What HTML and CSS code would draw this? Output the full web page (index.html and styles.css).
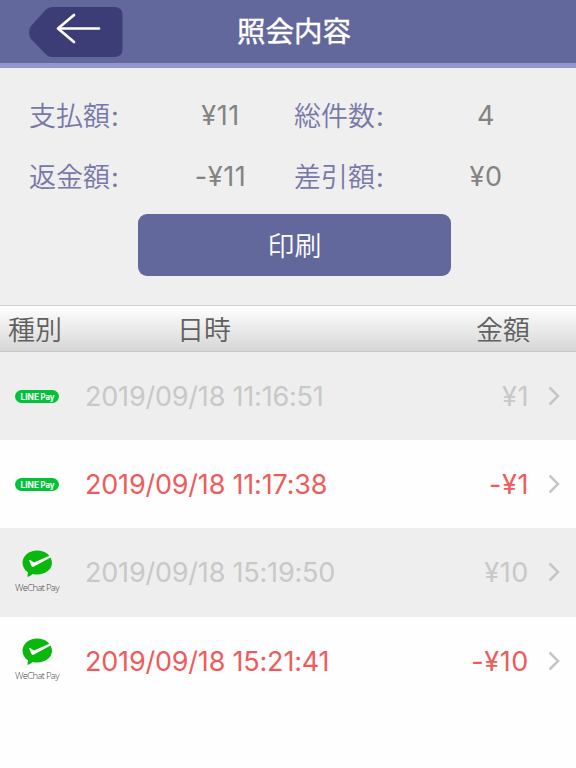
FILE: index.html
```html
<!DOCTYPE html>
<html lang="ja">
<head>
<meta charset="UTF-8">
<title>照会内容</title>
<link rel="stylesheet" href="styles.css">
</head>
<body>
    <div class="header">
        <svg class="back" viewBox="0 0 95 52" width="95" height="52">
            <path class="back-shape" d="M24 1 H86 Q94.500 1 94.500 9 V43 Q94.500 51 86 51 H24 Q20.500 51 18 48.500 L3 33 Q-1 26 3 20 L18 3.500 Q20.500 1 24 1 Z"/>
            <path class="back-arrow" d="M46 9 L30 22.500 L46 36 M30 22.500 H71"/>
        </svg>
        <h1>照会内容</h1>
    </div>

    <div class="summary">
        <div class="totals">
            <span class="label">支払額<b>:</b></span>
            <span class="value">¥11</span>
            <span class="label">総件数<b>:</b></span>
            <span class="value">4</span>
            <span class="label">返金額<b>:</b></span>
            <span class="value">-¥11</span>
            <span class="label">差引額<b>:</b></span>
            <span class="value">¥0</span>
        </div>
        <button class="print">印刷</button>
    </div>

    <div class="list-head">
        <span class="head-type">種別</span>
        <span class="head-date">日時</span>
        <span class="head-amount">金額</span>
    </div>

    <div class="list">
        <div class="row paid">
            <div class="type"><span class="line-pay"><svg width="44" height="13" viewBox="0 0 44 13"><text x="5.500" y="9.600" textLength="18.500" lengthAdjust="spacingAndGlyphs">LINE</text><text x="25.500" y="9.600" textLength="14" lengthAdjust="spacingAndGlyphs">Pay</text></svg></span></div>
            <span class="date">2019/09/18 11:16:51</span>
            <span class="amount">¥1</span>
            <svg class="chevron" width="12" height="20" viewBox="0 0 12 20"><path d="M1.500 1.500 L10 10 L1.500 18.500"/></svg>
        </div>
        <div class="row refund">
            <div class="type"><span class="line-pay"><svg width="44" height="13" viewBox="0 0 44 13"><text x="5.500" y="9.600" textLength="18.500" lengthAdjust="spacingAndGlyphs">LINE</text><text x="25.500" y="9.600" textLength="14" lengthAdjust="spacingAndGlyphs">Pay</text></svg></span></div>
            <span class="date">2019/09/18 11:17:38</span>
            <span class="amount">-¥1</span>
            <svg class="chevron" width="12" height="20" viewBox="0 0 12 20"><path d="M1.500 1.500 L10 10 L1.500 18.500"/></svg>
        </div>
        <div class="row paid">
            <div class="type wechat">
                <svg width="44" height="29" viewBox="0 0 44 29">
                    <path class="bubble" d="M22 1.500 C30.500 1.500 37 7 37 13.800 C37 20.500 30.500 25.500 22 25.500 Q20 25.500 18 25 L13.500 27.800 Q12 28 12.500 26.500 L13 23.500 C9.500 21 7.500 17.500 7.500 13.800 C7.500 7 14 1.500 22 1.500 Z"/>
                    <path class="check" d="M14 11.500 Q14.500 10.500 15.500 11.200 L19 13.500 L35.500 6.300 L36.500 8 L18.500 17.800 Q17 18.500 16.500 17 Z"/>
                </svg>
                <span class="wechat-name">WeChat Pay</span>
            </div>
            <span class="date">2019/09/18 15:19:50</span>
            <span class="amount">¥10</span>
            <svg class="chevron" width="12" height="20" viewBox="0 0 12 20"><path d="M1.500 1.500 L10 10 L1.500 18.500"/></svg>
        </div>
        <div class="row refund">
            <div class="type wechat">
                <svg width="44" height="29" viewBox="0 0 44 29">
                    <path class="bubble" d="M22 1.500 C30.500 1.500 37 7 37 13.800 C37 20.500 30.500 25.500 22 25.500 Q20 25.500 18 25 L13.500 27.800 Q12 28 12.500 26.500 L13 23.500 C9.500 21 7.500 17.500 7.500 13.800 C7.500 7 14 1.500 22 1.500 Z"/>
                    <path class="check" d="M14 11.500 Q14.500 10.500 15.500 11.200 L19 13.500 L35.500 6.300 L36.500 8 L18.500 17.800 Q17 18.500 16.500 17 Z"/>
                </svg>
                <span class="wechat-name">WeChat Pay</span>
            </div>
            <span class="date">2019/09/18 15:21:41</span>
            <span class="amount">-¥10</span>
            <svg class="chevron" width="12" height="20" viewBox="0 0 12 20"><path d="M1.500 1.500 L10 10 L1.500 18.500"/></svg>
        </div>
    </div>
</body>
</html>
```

FILE: styles.css
```css
body {
    font-family: Inter, "Noto Sans CJK JP", sans-serif;
    font-size: 27px;
    font-weight: 350;
    background-color: #fefefe;
    height: 768px;
    margin: 0;
    overflow: hidden;
}
.header {
    box-sizing: border-box;
    display: grid;
    grid-template-columns: 123px 1fr 123px;
    align-items: start;
    height: 68px;
    padding: 6px 0 0;
    background-color: #62679c;
    border-bottom: 5px solid #9296cc;
}
.back {
    justify-self: end;
}
.back-shape {
    fill: #3c3d77;
}
.back-arrow {
    fill: none;
    stroke: #fff;
    stroke-width: 2.7;
    stroke-linecap: round;
    stroke-linejoin: round;
}
h1 {
    margin: 0 0 0 12px;
    font-family: "Noto Sans CJK JP", sans-serif;
    font-size: 28.500px;
    font-weight: 400;
    -webkit-text-stroke: 0.4px #fff;
    line-height: 48px;
    text-align: center;
    color: #fff;
}
.summary {
    box-sizing: border-box;
    height: 237px;
    padding-top: 16px;
    background-color: #efefef;
}
.totals {
    display: grid;
    grid-template-columns: 118px 147px 118px 148px;
    grid-auto-rows: 61.500px;
    align-items: center;
    padding-left: 29px;
}
.label {
    padding-bottom: 1px;
    color: #7778a8;
}
.label b {
    margin-left: 1px;
    font-weight: 400;
}
.value {
    padding-top: 1px;
    color: #838383;
    font-weight: 400;
    letter-spacing: 0.6px;
    text-align: center;
}
.print {
    display: block;
    width: 313px;
    height: 62px;
    margin: 7px auto 0 138px;
    padding: 0 0 2px;
    border: none;
    border-radius: 9px;
    background-color: #62679c;
    color: #fff;
    font: inherit;
}
.list-head {
    box-sizing: border-box;
    display: flex;
    align-items: center;
    height: 47px;
    padding: 0 46px 1px 8px;
    border-top: 1px solid #cfcfcf;
    border-bottom: 1px solid #c8c8c8;
    background: linear-gradient(#fff, #d6d6d6);
    color: #5f5f5f;
}
.head-date {
    margin-left: 115px;
}
.head-amount {
    margin-left: auto;
}
.row {
    box-sizing: border-box;
    display: flex;
    align-items: center;
    height: 88.200px;
    padding: 0 16px 0 15px;
}
.paid {
    background-color: #eee;
    color: #c8c8c8;
}
.refund {
    color: #ef5b5b;
}
.type {
    width: 70px;
}
.date,
.amount {
    padding-top: 1px;
    font-weight: 400;
    letter-spacing: -0.2px;
}
.amount {
    margin-left: auto;
    letter-spacing: 0.6px;
}
.chevron {
    margin-left: 19px;
}
.chevron path {
    fill: none;
    stroke: #c5c5ca;
    stroke-width: 2.5;
}
.line-pay {
    display: block;
    width: 44px;
    height: 13px;
    border-radius: 7px;
    background-color: #00c339;
}
.line-pay svg,
.wechat svg {
    display: block;
}
.line-pay text {
    fill: #fff;
    font-size: 9px;
    font-weight: 700;
}
.bubble {
    fill: #09b80c;
}
.check {
    fill: #fff;
}
.wechat-name {
    display: block;
    color: #444;
    font-family: "Open Sans", sans-serif;
    font-size: 9.500px;
    font-weight: 300;
    letter-spacing: -0.7px;
    line-height: 17px;
    padding-top: 1px;
    white-space: nowrap;
}
```
